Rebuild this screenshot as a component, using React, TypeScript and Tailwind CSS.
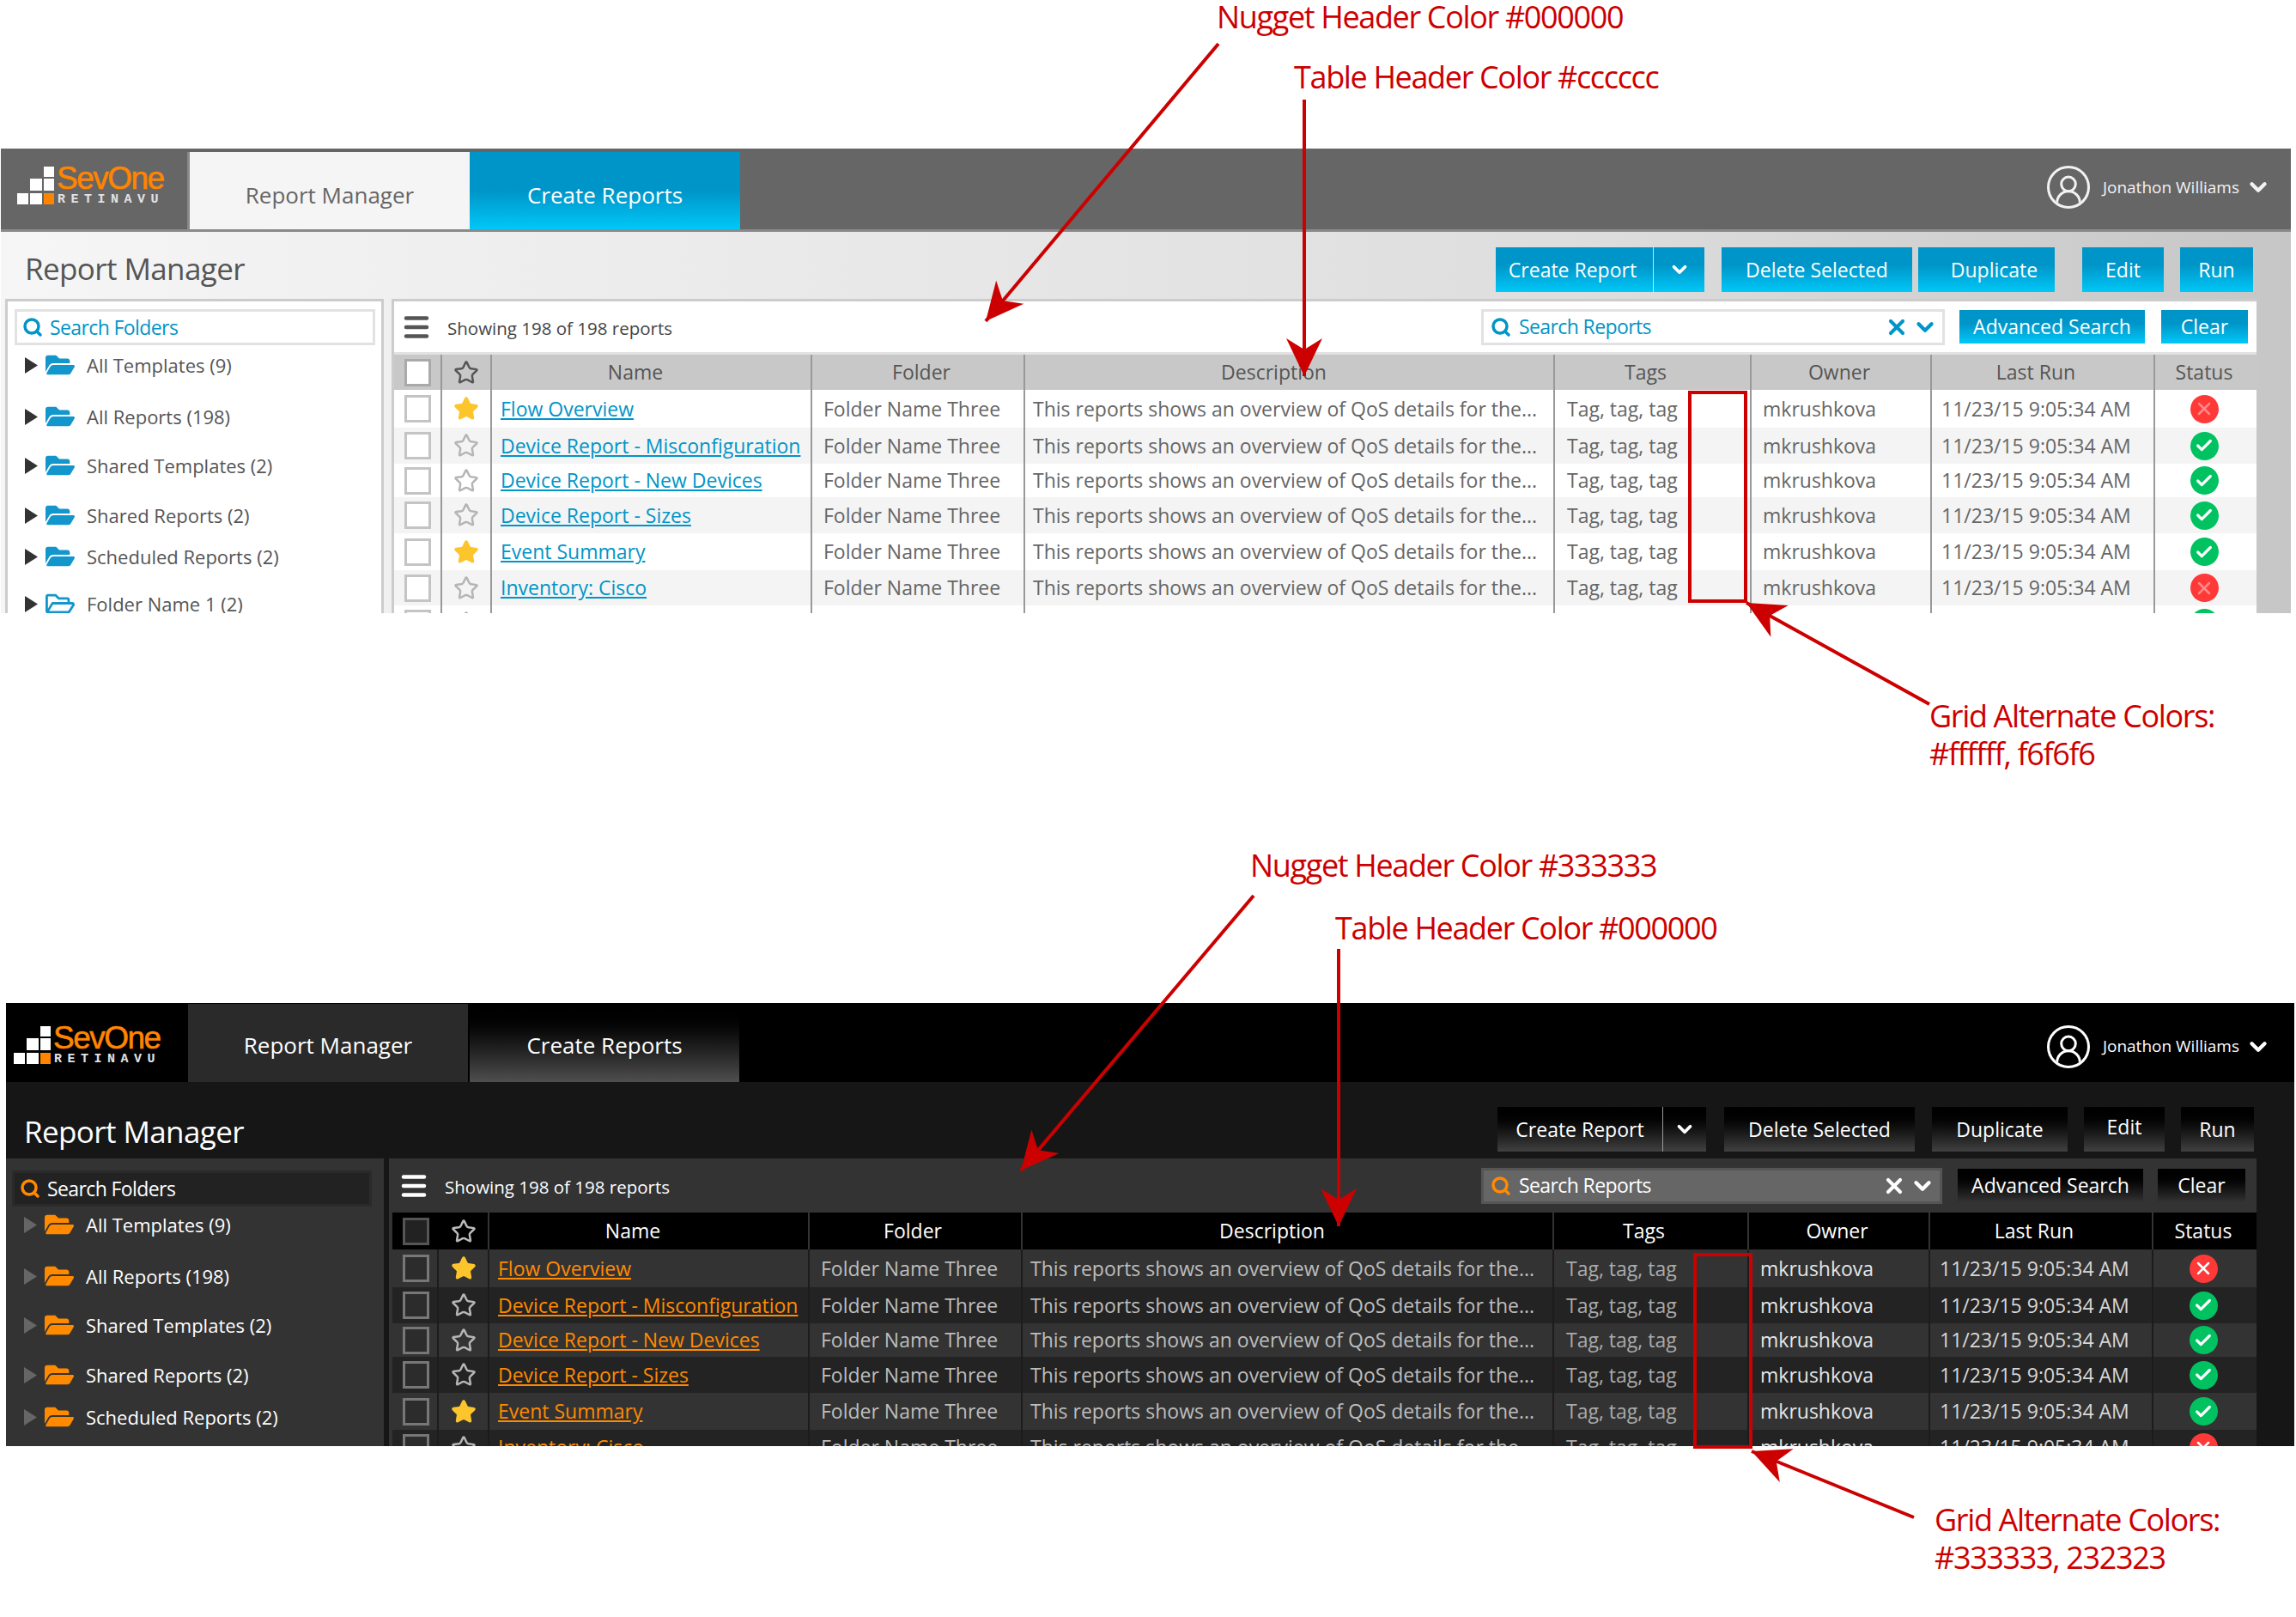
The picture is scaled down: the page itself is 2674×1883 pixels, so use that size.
import { Check, ChevronDown, Menu, Search, Star, UserRound, X } from 'lucide-react'
import { FaFolderOpen, FaRegFolderOpen } from 'react-icons/fa'

interface Theme {
  section: string
  header: string
  logoBox: string
  logoText: string
  logoSub: string
  logoSquare: string
  tabOne: string
  tabTwo: string
  user: string
  page: string
  title: string
  titleBar: string
  button: string
  buttons: { label: string; className: string }[]
  caretWidth: string
  caretDivider: string
  sidebar: string
  searchFolders: string
  searchFoldersText: string
  searchIcon: string
  treeList: string
  treeGaps: string[]
  treeText: string
  caret: string
  folder: string
  main: string
  toolbar: string
  menuIcon: string
  toolbarText: string
  searchReports: string
  searchReportsText: string
  searchTools: string
  advanced: string
  clear: string
  smallButton: string
  tableHead: string
  columns: string
  headCell: string
  headFirst: string
  headFolder: string
  headStatus: string
  headCheck: string
  headStar: string
  rowEven: string
  rowOdd: string
  cell: string
  check: string
  star: string
  link: string
  folderCell: string
  description: string
  tags: string
  owner: string
  lastRun: string
  failIcon: string
}

const light: Theme = {
  section: 'ml-[1px] mt-[173px] h-[541px] w-[2667px]',
  header: 'h-[97px] bg-[#666666] pt-1 pl-[1px] border-b-[3px] border-[#8a8a8a]',
  logoBox: 'w-[219px] pl-[18px] pt-[13px] border-r-[3px] border-[#8a8a8a]',
  logoText: 'text-[#ff8500]',
  logoSub: 'text-[#e2e2e2]',
  logoSquare: '#ffffff',
  tabOne: 'ml-0 w-[326px] bg-[#f5f5f5] text-[#666666] pt-[10px]',
  tabTwo: 'w-[315px] bg-linear-to-b from-[#0095c8] from-50% to-[#00c8f8] text-white pt-[10px]',
  user: 'mr-[23px] pb-[8px] text-[#f2f2f2]',
  page: 'bg-linear-to-r from-[#f6f6f6] via-[#dddddd] via-70% to-[#c6c6c6]',
  title: 'pl-[28px] pt-[16px] text-[#555555]',
  titleBar: 'h-[78px] pr-[44px] pb-[8px]',
  button: 'bg-linear-to-b from-[#0095c8] from-40% to-[#00c8f8] text-white',
  buttons: [
    { label: 'Delete Selected', className: 'ml-[20px] w-[222px]' },
    { label: 'Duplicate', className: 'ml-[7px] w-[159px] pl-[18px]' },
    { label: 'Edit', className: 'ml-[32px] w-[95px]' },
    { label: 'Run', className: 'ml-[19px] w-[85px]' },
  ],
  caretWidth: 'w-[59px] ml-[1px]',
  caretDivider: 'w-[183px] pr-[4px]',
  sidebar: 'ml-[5px] w-[441px] border-[3px] border-b-0 border-[#cccccc] bg-white',
  searchFolders: 'mx-[8px] mt-[9px] w-[420px] border-[3px] border-[#e2e2e2] bg-white',
  searchFoldersText: 'text-[#0095c8]',
  searchIcon: 'text-[#0095c8]',
  treeList: 'pl-[20px]',
  treeGaps: ['mt-[6px]', 'mt-[26px]', 'mt-[23px]', 'mt-[24px]', 'mt-[14px]', 'mt-[21px]'],
  treeText: 'text-[#555555]',
  caret: 'text-[#333333]',
  folder: 'text-[#1296cc]',
  main: 'ml-[9px] w-[2172px] border-t-[3px] border-l-[3px] border-[#cccccc] bg-white',
  toolbar: 'h-[62px] border-b-[3px] border-[#e2e2e2] pl-[8px]',
  menuIcon: 'text-[#555555]',
  toolbarText: 'text-[#444444]',
  searchReports: 'w-[540px] border-[3px] border-[#e2e2e2] bg-white',
  searchReportsText: 'text-[#0095c8]',
  searchTools: 'text-[#0095c8]',
  advanced: 'ml-[17px] w-[216px]',
  clear: 'ml-[19px] w-[101px] mr-[10px]',
  smallButton: 'bg-linear-to-b from-[#0095c8] from-40% to-[#00c8f8] text-white',
  tableHead: 'h-[41px] bg-[#c8c8c8]',
  columns: 'grid-cols-[56px_58px_373px_248px_617px_229px_210px_260px_118px]',
  headCell: 'border-[#999999] text-[#555555]',
  headFirst: 'border-r-2 border-[#999999]',
  headFolder: 'pl-[8px]',
  headStatus: 'text-[#555555]',
  headCheck: 'border-[#aaaaaa] bg-white',
  headStar: 'text-[#555555]',
  rowEven: 'bg-white',
  rowOdd: 'bg-[#f4f4f4]',
  cell: 'border-[#999999]',
  check: 'border-[#c4c4c4] bg-white',
  star: 'text-[#b5b5b5]',
  link: 'text-[#0095c8]',
  folderCell: 'text-[#666666]',
  description: 'text-[#666666]',
  tags: 'text-[#666666]',
  owner: 'text-[#666666]',
  lastRun: 'text-[#666666]',
  failIcon: 'text-[#ff8a8a]',
}

const dark: Theme = {
  section: 'ml-[7px] mt-[454px] h-[516px] w-[2665px]',
  header: 'h-[92px] bg-black pt-[1px]',
  logoBox: 'w-[212px] pl-[9px] pt-[22px]',
  logoText: 'text-[#ff8500]',
  logoSub: 'text-[#e2e2e2]',
  logoSquare: '#ffffff',
  tabOne: 'w-[326px] bg-[#2a2a2a] text-white pt-[6px]',
  tabTwo: 'ml-[2px] w-[314px] bg-linear-to-b from-black to-[#4f4f4f] text-white pt-[6px]',
  user: 'mr-[27px] pt-[8px] text-white',
  page: 'bg-[#161616]',
  title: 'pl-[21px] pt-[36px] text-white',
  titleBar: 'h-[89px] pr-[47px] pb-[8px]',
  button: 'bg-linear-to-b from-black to-[#414141] text-white',
  buttons: [
    { label: 'Delete Selected', className: 'ml-[21px] w-[222px]' },
    { label: 'Duplicate', className: 'ml-[20px] w-[158px]' },
    { label: 'Edit', className: 'ml-[19px] w-[94px] pb-[6px]' },
    { label: 'Run', className: 'ml-[19px] w-[85px]' },
  ],
  caretWidth: 'w-[51px] border-l border-[#999999]',
  caretDivider: 'w-[192px]',
  sidebar: 'w-[440px] bg-[#333333]',
  searchFolders: 'mx-[7px] mt-[14px] w-[419px] border-[3px] border-[#2a2a2a] bg-[#222222]',
  searchFoldersText: 'text-white',
  searchIcon: 'text-[#ff8a00]',
  treeList: 'pl-[21px]',
  treeGaps: ['mt-[4px]', 'mt-[26px]', 'mt-[23px]', 'mt-[24px]', 'mt-[15px]', 'mt-[21px]'],
  treeText: 'text-white',
  caret: 'text-[#666666]',
  folder: 'text-[#ff8a00]',
  main: 'ml-[6px] w-[2175px] bg-[#333333]',
  toolbar: 'h-[63px] pl-[11px]',
  menuIcon: 'text-white',
  toolbarText: 'text-white',
  searchReports: 'w-[537px] border-[3px] border-[#555555] bg-[#666666]',
  searchReportsText: 'text-white',
  searchTools: 'text-white',
  advanced: 'ml-[18px] w-[216px]',
  clear: 'ml-[17px] w-[102px] mr-[13px]',
  smallButton: 'bg-linear-to-b from-black to-[#333333] text-white',
  tableHead: 'h-[43px] bg-black ml-[4px]',
  columns: 'grid-cols-[54px_59px_373px_248px_619px_227px_211px_260px_120px]',
  headCell: 'border-[#333333] text-white',
  headFirst: '',
  headFolder: 'pr-[6px]',
  headStatus: 'text-white',
  headCheck: 'border-[#555555] bg-[#222222]',
  headStar: 'text-[#bbbbbb]',
  rowEven: 'bg-[#333333] ml-[4px]',
  rowOdd: 'bg-[#232323] ml-[4px]',
  cell: 'border-[#1c1c1c]',
  check: 'border-[#777777] bg-[#2c2c2c]',
  star: 'text-[#b5b5b5]',
  link: 'text-[#ff8a00]',
  folderCell: 'text-[#bdbdbd]',
  description: 'text-[#bdbdbd]',
  tags: 'text-[#aaaaaa]',
  owner: 'text-[#e6e6e6]',
  lastRun: 'text-[#d8d8d8]',
  failIcon: 'text-white',
}

const folders = ['All Templates (9)', 'All Reports (198)', 'Shared Templates (2)', 'Shared Reports (2)', 'Scheduled Reports (2)', 'Folder Name 1 (2)']

const reports = [
  { name: 'Flow Overview', starred: true, ok: false, height: 'h-[44px]' },
  { name: 'Device Report - Misconfiguration', starred: false, ok: true, height: 'h-[42px]' },
  { name: 'Device Report - New Devices', starred: false, ok: true, height: 'h-[39px]' },
  { name: 'Device Report - Sizes', starred: false, ok: true, height: 'h-[42px]' },
  { name: 'Event Summary', starred: true, ok: true, height: 'h-[43px]' },
  { name: 'Inventory: Cisco', starred: false, ok: false, height: 'h-[41px]' },
  { name: '', starred: false, ok: true, height: 'h-[41px]' },
]

const heads = [
  { label: 'Name', className: 'pr-[37px]' },
  { label: 'Folder', className: '' },
  { label: 'Description', className: 'pr-[36px]' },
  { label: 'Tags', className: 'pr-[16px]' },
  { label: 'Owner', className: 'pr-[4px]' },
  { label: 'Last Run', className: 'pr-[16px]' },
]

function Logo({ theme }: { theme: Theme }) {
  return (
    <div className={`flex shrink-0 items-start ${theme.logoBox}`}>
      <svg width="44" height="45" viewBox="0 0 44 45" className="mt-[4px] shrink-0">
        <rect x="31" y="0" width="12" height="12" fill={theme.logoSquare} />
        <rect x="15" y="14" width="14" height="14" fill={theme.logoSquare} />
        <rect x="31" y="14" width="12" height="14" fill={theme.logoSquare} />
        <rect x="0" y="31" width="13" height="13" fill={theme.logoSquare} />
        <rect x="15" y="31" width="14" height="13" fill={theme.logoSquare} />
        <rect x="31" y="31" width="12" height="13" fill="#ff8500" />
      </svg>
      <div className="ml-[2px] mt-[1px] flex flex-col">
        <span className={`text-[37px] leading-[34px] tracking-[-1.5px] [-webkit-text-stroke:0.6px_#ff8500] font-['Liberation_Sans',sans-serif] ${theme.logoText}`}>SevOne</span>
        <span className={`pl-[1px] text-[15px] leading-[15px] font-bold tracking-[6.5px] font-['Liberation_Mono',monospace] ${theme.logoSub}`}>RETINAVU</span>
      </div>
    </div>
  )
}

function CheckBox({ className }: { className: string }) {
  return <span className={`block h-[32px] w-[31px] border-[3px] ${className}`} />
}

function ReportRow({ theme, report, odd }: { theme: Theme; report: (typeof reports)[number]; odd: boolean }) {
  const cell = `flex items-center border-r-2 ${theme.cell}`
  return (
    <div className={`grid shrink-0 ${theme.columns} ${report.height} ${odd ? theme.rowOdd : theme.rowEven}`}>
      <div className={`${cell} pl-[12px]`}>
        <CheckBox className={theme.check} />
      </div>
      <div className={`${cell} justify-center`}>
        {report.starred ? (
          <Star size={30} strokeWidth={2} className="fill-[#fdc52c] text-[#fdc52c]" />
        ) : (
          <Star size={30} strokeWidth={2} className={theme.star} />
        )}
      </div>
      <div className={`${cell} pl-[10px] overflow-hidden`}>
        <a className={`whitespace-nowrap underline underline-offset-2 ${theme.link}`}>{report.name}</a>
      </div>
      <div className={`${cell} pl-[13px] whitespace-nowrap ${theme.folderCell}`}>{report.name && 'Folder Name Three'}</div>
      <div className={`${cell} pl-[9px] whitespace-nowrap ${theme.description}`}>{report.name && 'This reports shows an overview of QoS details for the...'}</div>
      <div className={`${cell} pl-[14px] whitespace-nowrap ${theme.tags}`}>{report.name && 'Tag, tag, tag'}</div>
      <div className={`${cell} pl-[13px] ${theme.owner}`}>{report.name && 'mkrushkova'}</div>
      <div className={`${cell} pl-[11px] whitespace-nowrap ${theme.lastRun}`}>{report.name && '11/23/15 9:05:34 AM'}</div>
      <div className="flex items-center justify-center pr-[4px]">
        {report.ok ? (
          <span className="flex size-[33px] items-center justify-center rounded-full bg-[#00c261] text-white">
            <Check size={22} strokeWidth={3.5} />
          </span>
        ) : (
          <span className={`flex size-[33px] items-center justify-center rounded-full bg-[#ff3838] ${theme.failIcon}`}>
            <X size={24} strokeWidth={2.5} />
          </span>
        )}
      </div>
    </div>
  )
}

function ReportManager({ theme, folderCount }: { theme: Theme; folderCount: number }) {
  const headCell = `flex items-center justify-center border-r-2 ${theme.headCell}`
  return (
    <section className={`flex flex-col overflow-hidden font-['Open_Sans',sans-serif] text-[23px] ${theme.section}`}>
      <header className={`flex shrink-0 items-stretch ${theme.header}`}>
        <Logo theme={theme} />
        <div className={`flex items-center justify-center text-[26px] ${theme.tabOne}`}>Report Manager</div>
        <div className={`flex items-center justify-center text-[26px] ${theme.tabTwo}`}>Create Reports</div>
        <div className={`ml-auto flex items-center text-[19px] ${theme.user}`}>
          <span className="flex size-[50px] items-center justify-center rounded-full border-[3px] border-current overflow-hidden">
            <UserRound size={40} strokeWidth={1.8} className="mt-[6px]" />
          </span>
          <span className="ml-[15px]">Jonathon Williams</span>
          <ChevronDown size={30} strokeWidth={3.5} className="ml-[7px]" />
        </div>
      </header>

      <div className={`flex flex-1 flex-col min-h-0 ${theme.page}`}>
        <div className={`flex shrink-0 items-center ${theme.titleBar}`}>
          <h1 className={`text-[35px] tracking-[-0.6px] ${theme.title}`}>Report Manager</h1>
          <div className="ml-auto flex h-[52px] items-stretch self-end">
            <button className={`${theme.button} ${theme.caretDivider} flex items-center justify-center`}>Create Report</button>
            <button className={`${theme.button} ${theme.caretWidth} flex items-center justify-center`}>
              <ChevronDown size={26} strokeWidth={3.5} />
            </button>
            {theme.buttons.map((b) => (
              <button key={b.label} className={`${theme.button} ${b.className} flex items-center justify-center`}>
                {b.label}
              </button>
            ))}
          </div>
        </div>

        <div className="flex min-h-0 flex-1">
          <aside className={`shrink-0 overflow-hidden ${theme.sidebar}`}>
            <div className={`flex h-[42px] items-center gap-[8px] pl-[6px] tracking-[-0.6px] ${theme.searchFolders} ${theme.searchFoldersText}`}>
              <Search size={24} strokeWidth={3.5} className={theme.searchIcon} />
              Search Folders
            </div>
            <ul className={`text-[22px] ${theme.treeList}`}>
              {folders.slice(0, folderCount).map((name, i) => (
                <li key={name} className={`flex h-[34px] items-center ${theme.treeGaps[i]} ${theme.treeText}`}>
                  <svg width="15" height="19" viewBox="0 0 15 19" className={`shrink-0 ${theme.caret}`}>
                    <path d="M0 0 L15 9.5 L0 19 Z" fill="currentColor" />
                  </svg>
                  {i === 5 ? (
                    <FaRegFolderOpen size={34} className={`ml-[9px] shrink-0 ${theme.folder}`} />
                  ) : (
                    <FaFolderOpen size={34} className={`ml-[9px] shrink-0 ${theme.folder}`} />
                  )}
                  <span className="ml-[14px]">{name}</span>
                </li>
              ))}
            </ul>
          </aside>

          <main className={`flex shrink-0 flex-col overflow-hidden ${theme.main}`}>
            <div className={`flex shrink-0 items-center ${theme.toolbar}`}>
              <Menu size={36} strokeWidth={3} className={theme.menuIcon} />
              <span className={`ml-[18px] pt-[3px] text-[20.5px] ${theme.toolbarText}`}>Showing 198 of 198 reports</span>
              <div className={`ml-auto flex h-[42px] items-center pl-[8px] pr-[5px] tracking-[-0.6px] ${theme.searchReports} ${theme.searchReportsText}`}>
                <Search size={24} strokeWidth={3.5} className={theme.searchIcon} />
                <span className="ml-[9px]">Search Reports</span>
                <X size={28} strokeWidth={3.5} className={`ml-auto ${theme.searchTools}`} />
                <ChevronDown size={30} strokeWidth={3.5} className={`ml-[4px] ${theme.searchTools}`} />
              </div>
              <button className={`h-[39px] ${theme.advanced} ${theme.smallButton}`}>Advanced Search</button>
              <button className={`h-[39px] ${theme.clear} ${theme.smallButton}`}>Clear</button>
            </div>

            <div className={`grid shrink-0 ${theme.columns} ${theme.tableHead}`}>
              <div className={`flex items-center pl-[12px] ${theme.headFirst}`}>
                <CheckBox className={theme.headCheck} />
              </div>
              <div className={headCell}>
                <Star size={30} strokeWidth={2} className={theme.headStar} />
              </div>
              {heads.map((h) => (
                <div key={h.label} className={`${headCell} ${h.label === 'Folder' ? theme.headFolder : h.className}`}>
                  {h.label}
                </div>
              ))}
              <div className={`flex items-center justify-center pr-[4px] ${theme.headStatus}`}>Status</div>
            </div>

            {reports.map((report, i) => (
              <ReportRow key={i} theme={theme} report={report} odd={i % 2 === 1} />
            ))}
          </main>
        </div>
      </div>
    </section>
  )
}

// red callouts drawn over the two mockups
function Arrow({ x1, y1, x2, y2 }: { x1: number; y1: number; x2: number; y2: number }) {
  const angle = (Math.atan2(y2 - y1, x2 - x1) * 180) / Math.PI
  return (
    <g>
      <line x1={x1} y1={y1} x2={x2} y2={y2} stroke="#cc0000" strokeWidth="4" />
      <polygon points="0,0 -44,-21 -31,0 -44,21" fill="#cc0000" transform={`translate(${x2} ${y2}) rotate(${angle})`} />
    </g>
  )
}

function Note({ className, children }: { className: string; children: string }) {
  return <div className={`absolute whitespace-nowrap font-['Open_Sans',sans-serif] text-[36px] leading-[44px] tracking-[-1.35px] text-[#cc0000] ${className}`}>{children}</div>
}

export default function App() {
  return (
    <div className="relative flex h-[1883px] w-[2674px] flex-col overflow-hidden bg-white">
      <ReportManager theme={light} folderCount={6} />
      <ReportManager theme={dark} folderCount={5} />

      <svg width="2674" height="1883" className="pointer-events-none absolute left-0 top-0">
        <Arrow x1={1419} y1={51} x2={1148} y2={374} />
        <Arrow x1={1519} y1={116} x2={1519} y2={438} />
        <Arrow x1={2247} y1={820} x2={2034} y2={702} />
        <rect x="1968" y="457" width="65" height="243" fill="none" stroke="#cc0000" strokeWidth="4" />
        <Arrow x1={1460} y1={1043} x2={1189} y2={1363} />
        <Arrow x1={1559} y1={1105} x2={1559} y2={1428} />
        <Arrow x1={2229} y1={1767} x2={2040} y2={1690} />
        <rect x="1974" y="1461" width="65" height="224" fill="none" stroke="#cc0000" strokeWidth="4" />
      </svg>

      <Note className="left-[1417px] top-[-2px]">Nugget Header Color #000000</Note>
      <Note className="left-[1507px] top-[68px]">Table Header Color #cccccc</Note>
      <Note className="left-[2247px] top-[812px]">Grid Alternate Colors:</Note>
      <Note className="left-[2247px] top-[856px]">#ffffff, f6f6f6</Note>
      <Note className="left-[1456px] top-[986px]">Nugget Header Color #333333</Note>
      <Note className="left-[1555px] top-[1059px]">Table Header Color #000000</Note>
      <Note className="left-[2253px] top-[1748px]">Grid Alternate Colors:</Note>
      <Note className="left-[2253px] top-[1792px]">#333333, 232323</Note>
    </div>
  )
}
